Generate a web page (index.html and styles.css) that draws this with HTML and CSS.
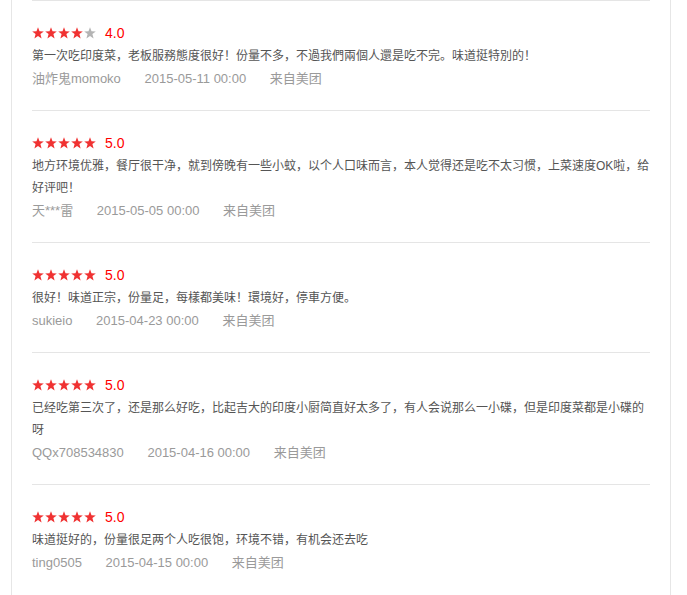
FILE: index.html
```html
<!DOCTYPE html>
<html lang="zh-CN">
<head>
    <meta charset="UTF-8">
    <meta name="viewport" content="width=device-width, initial-scale=1.0">
    <title>评价列表</title>
    <link rel="stylesheet" href="styles.css">
</head>
<body>
    <svg class="defs" width="0" height="0">
        <defs>
            <polygon id="star" points="6,0.3 7.5,4.3 11.8,4.4 8.4,7.1 9.6,11.4 6,8.9 2.4,11.4 3.6,7.1 0.2,4.4 4.5,4.3"/>
        </defs>
    </svg>

    <div class="container">
        <ul class="review-list">
            <!-- review 1 -->
            <li class="review">
                <div class="rating">
                    <span class="stars">
                        <svg class="star on" viewBox="0 0 12 12"><use href="#star"/></svg>
                        <svg class="star on" viewBox="0 0 12 12"><use href="#star"/></svg>
                        <svg class="star on" viewBox="0 0 12 12"><use href="#star"/></svg>
                        <svg class="star on" viewBox="0 0 12 12"><use href="#star"/></svg>
                        <svg class="star off" viewBox="0 0 12 12"><use href="#star"/></svg>
                    </span>
                    <span class="score">4.0</span>
                </div>
                <p class="comment">第一次吃印度菜，老板服務態度很好！份量不多，不過我們兩個人還是吃不完。味道挺特別的！</p>
                <div class="meta">
                    <span class="user">油炸鬼momoko</span>
                    <span class="time">2015-05-11 00:00</span>
                    <span class="source">来自美团</span>
                </div>
            </li>

            <!-- review 2 -->
            <li class="review">
                <div class="rating">
                    <span class="stars">
                        <svg class="star on" viewBox="0 0 12 12"><use href="#star"/></svg>
                        <svg class="star on" viewBox="0 0 12 12"><use href="#star"/></svg>
                        <svg class="star on" viewBox="0 0 12 12"><use href="#star"/></svg>
                        <svg class="star on" viewBox="0 0 12 12"><use href="#star"/></svg>
                        <svg class="star on" viewBox="0 0 12 12"><use href="#star"/></svg>
                    </span>
                    <span class="score">5.0</span>
                </div>
                <p class="comment">地方环境优雅，餐厅很干净，就到傍晚有一些小蚊，以个人口味而言，本人觉得还是吃不太习惯，上菜速度OK啦，给好评吧！</p>
                <div class="meta">
                    <span class="user">天***雷</span>
                    <span class="time">2015-05-05 00:00</span>
                    <span class="source">来自美团</span>
                </div>
            </li>

            <!-- review 3 -->
            <li class="review">
                <div class="rating">
                    <span class="stars">
                        <svg class="star on" viewBox="0 0 12 12"><use href="#star"/></svg>
                        <svg class="star on" viewBox="0 0 12 12"><use href="#star"/></svg>
                        <svg class="star on" viewBox="0 0 12 12"><use href="#star"/></svg>
                        <svg class="star on" viewBox="0 0 12 12"><use href="#star"/></svg>
                        <svg class="star on" viewBox="0 0 12 12"><use href="#star"/></svg>
                    </span>
                    <span class="score">5.0</span>
                </div>
                <p class="comment">很好！味道正宗，份量足，每樣都美味！環境好，停車方便。</p>
                <div class="meta">
                    <span class="user">sukieio</span>
                    <span class="time">2015-04-23 00:00</span>
                    <span class="source">来自美团</span>
                </div>
            </li>

            <!-- review 4 -->
            <li class="review">
                <div class="rating">
                    <span class="stars">
                        <svg class="star on" viewBox="0 0 12 12"><use href="#star"/></svg>
                        <svg class="star on" viewBox="0 0 12 12"><use href="#star"/></svg>
                        <svg class="star on" viewBox="0 0 12 12"><use href="#star"/></svg>
                        <svg class="star on" viewBox="0 0 12 12"><use href="#star"/></svg>
                        <svg class="star on" viewBox="0 0 12 12"><use href="#star"/></svg>
                    </span>
                    <span class="score">5.0</span>
                </div>
                <p class="comment">已经吃第三次了，还是那么好吃，比起吉大的印度小厨简直好太多了，有人会说那么一小碟，但是印度菜都是小碟的呀</p>
                <div class="meta">
                    <span class="user">QQx708534830</span>
                    <span class="time">2015-04-16 00:00</span>
                    <span class="source">来自美团</span>
                </div>
            </li>

            <!-- review 5 -->
            <li class="review">
                <div class="rating">
                    <span class="stars">
                        <svg class="star on" viewBox="0 0 12 12"><use href="#star"/></svg>
                        <svg class="star on" viewBox="0 0 12 12"><use href="#star"/></svg>
                        <svg class="star on" viewBox="0 0 12 12"><use href="#star"/></svg>
                        <svg class="star on" viewBox="0 0 12 12"><use href="#star"/></svg>
                        <svg class="star on" viewBox="0 0 12 12"><use href="#star"/></svg>
                    </span>
                    <span class="score">5.0</span>
                </div>
                <p class="comment">味道挺好的，份量很足两个人吃很饱，环境不错，有机会还去吃</p>
                <div class="meta">
                    <span class="user">ting0505</span>
                    <span class="time">2015-04-15 00:00</span>
                    <span class="source">来自美团</span>
                </div>
            </li>
        </ul>
    </div>
</body>
</html>
```

FILE: styles.css
```css
* {
    margin: 0;
    padding: 0;
    box-sizing: border-box;
}

body {
    font-family: 'Liberation Sans', 'Noto Sans CJK SC', sans-serif;
    background: white;
    overflow: hidden;
}

.defs {
    position: absolute;
}

.container {
    width: 660px;
    margin-left: 11px;
    padding: 0 20px;
    border-left: 1px solid #e6e6e6;
    border-right: 1px solid #e6e6e6;
    min-height: 100vh;
}

.review-list {
    list-style: none;
}

.review {
    border-top: 1px solid #e5e5e5;
    padding: 20px 0 19px;
}

.rating {
    display: flex;
    align-items: center;
    height: 24px;
}

.stars {
    display: flex;
    gap: 1px;
}

.star {
    width: 12px;
    height: 12px;
}

.star.on {
    fill: #f03232;
}

.star.off {
    fill: #b4b4b4;
}

.score {
    margin-left: 9px;
    font-size: 14px;
    color: #f00;
}

.comment {
    font-size: 12px;
    line-height: 22px;
    color: #555;
}

.meta {
    font-size: 13px;
    line-height: 24px;
    color: #9a9a9a;
}

.meta span {
    margin-right: 20px;
}
```
